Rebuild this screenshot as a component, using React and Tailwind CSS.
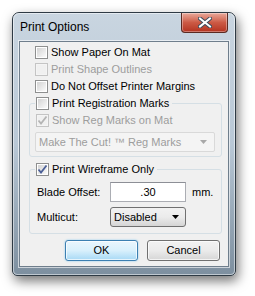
import React from 'react';

const font = "font-['Segoe_UI','Liberation_Sans',Arial,sans-serif]";

function Check({ checked, disabled }) {
  return (
    <span
      className={`flex h-[13px] w-[13px] shrink-0 items-center justify-center border ${
        disabled ? 'border-[#c4c4c4] bg-[#f4f4f4]' : 'border-[#8e8f8f] bg-white'
      }`}
    >
      <span
        className={`relative flex h-[9px] w-[9px] items-center justify-center ${
          disabled ? 'bg-[#f0f0f0]' : 'bg-gradient-to-br from-[#d3d3d3] to-[#fbfbfb]'
        }`}
      >
        {checked && (
          <svg width="11" height="11" viewBox="0 0 11 11" className="absolute -left-[1px] -top-[1px]">
            <path
              d="M1.5 5.5 L4 8.5 L9.5 1.5"
              fill="none"
              stroke={disabled ? '#b4b4b4' : '#4b5f97'}
              strokeWidth="1.8"
            />
          </svg>
        )}
      </span>
    </span>
  );
}

function Row({ label, checked, disabled }) {
  return (
    <div className="flex h-[17px] items-center pl-[15px]">
      <Check checked={checked} disabled={disabled} />
      <span className={`ml-[3px] text-[11px] ${disabled ? 'text-[#9d9d9d]' : 'text-black'}`}>{label}</span>
    </div>
  );
}

function GroupHeader({ label, checked }) {
  return (
    <div className="-mt-[9px] flex h-[17px] items-center pl-[5px]">
      <span className="flex items-center bg-[#f0f0f0] pl-px pr-[3px]">
        <Check checked={checked} />
        <span className="ml-[3px] text-[11px] text-black">{label}</span>
      </span>
    </div>
  );
}

function Arrow({ color }) {
  return (
    <svg width="7" height="4" viewBox="0 0 7 4">
      <path d="M0 0 H7 L3.5 4 Z" fill={color} />
    </svg>
  );
}

export default function App() {
  return (
    <div className={`h-[296px] w-[255px] overflow-hidden bg-white pl-[12px] pt-[12px] ${font}`}>
      <div className="relative h-[264px] w-[224px] rounded-t-[7px] rounded-b-[5px] border border-[#2e3a44] bg-gradient-to-b from-[#c9d5e0] via-[#b9c8d6] to-[#7d8f9f] px-[6px] pb-[8px] pt-[28px] shadow-[2px_5px_12px_rgba(0,0,0,0.55)]">
        <div className="pointer-events-none absolute inset-0 rounded-t-[6px] rounded-b-[4px] border border-white/50" />
        <div className="absolute left-[7px] top-[7px] text-[12px] leading-[15px] text-black">Print Options</div>
        <div className="absolute left-[168px] top-0 flex h-[20px] w-[47px] items-center justify-center rounded-b-[4px] border border-t-0 border-[#5a2a22] bg-gradient-to-b from-[#e9a99b] via-[#cc5a45] to-[#b3321f] shadow-[inset_0_0_0_1px_rgba(255,255,255,0.35)]">
          <svg width="14" height="11" viewBox="0 0 14 11">
            <path d="M2 1.5 L12 9.5 M12 1.5 L2 9.5" stroke="#3b4b5c" strokeWidth="4" strokeLinecap="square" />
            <path d="M2 1.5 L12 9.5 M12 1.5 L2 9.5" stroke="#ffffff" strokeWidth="2" strokeLinecap="square" />
          </svg>
        </div>

        <div className="h-[226px] w-[210px] border border-[#6f7e8c] bg-[#f0f0f0] shadow-[0_0_0_1px_rgba(255,255,255,0.6)]">
          <div className="pt-[2px]">
            <Row label="Show Paper On Mat" />
            <Row label="Print Shape Outlines" disabled />
            <Row label="Do Not Offset Printer Margins" />
          </div>

          <div className="ml-[9px] mt-[8px] h-[54px] w-[193px] rounded-[3px] border border-[#d5dfe5]">
            <GroupHeader label="Print Registration Marks" />
            <div className="-ml-[9px]">
              <Row label="Show Reg Marks on Mat" checked disabled />
            </div>
            <div className="ml-[5px] mt-[3px] flex h-[20px] w-[180px] items-center justify-between rounded-[2px] border border-[#d9d9d9] bg-[#f4f4f4] pl-[3px] pr-[7px] text-[11px] text-[#9d9d9d]">
              <span>Make The Cut! ™ Reg Marks</span>
              <Arrow color="#a8a8a8" />
            </div>
          </div>

          <div className="ml-[9px] mt-[12px] h-[65px] w-[193px] rounded-[3px] border border-[#d5dfe5]">
            <GroupHeader label="Print Wireframe Only" checked />
            <div className="mt-[4px] flex items-center pl-[7px] text-[11px] text-black">
              <span className="w-[73px]">Blade Offset:</span>
              <div className="flex h-[20px] w-[76px] items-center justify-center border border-[#abadb3] border-t-[#8d8f96] bg-white">
                .30
              </div>
              <span className="ml-[6px]">mm.</span>
            </div>
            <div className="mt-[5px] flex items-center pl-[7px] text-[11px] text-black">
              <span className="w-[73px]">Multicut:</span>
              <div className="flex h-[20px] w-[76px] items-center justify-between rounded-[3px] border border-[#707070] bg-gradient-to-b from-[#f2f2f2] via-[#ebebeb] to-[#d5d5d5] pl-[3px] pr-[6px]">
                <span>Disabled</span>
                <Arrow color="#000000" />
              </div>
            </div>
          </div>

          <div className="mt-[6px] flex justify-end gap-[9px] pr-[8px] text-[11px] text-black">
            <button className="flex h-[21px] w-[73px] items-center justify-center rounded-[3px] border border-[#3c7fb1] bg-gradient-to-b from-[#eaf6fd] via-[#d9f0fc] to-[#a7d9f5] shadow-[inset_0_0_0_1px_rgba(255,255,255,0.7),0_0_2px_#7fc6ee]">
              OK
            </button>
            <button className="flex h-[21px] w-[73px] items-center justify-center rounded-[3px] border border-[#707070] bg-gradient-to-b from-[#f2f2f2] via-[#ebebeb] to-[#d6d6d6] shadow-[inset_0_0_0_1px_rgba(255,255,255,0.7)]">
              Cancel
            </button>
          </div>
        </div>
      </div>
    </div>
  );
}
